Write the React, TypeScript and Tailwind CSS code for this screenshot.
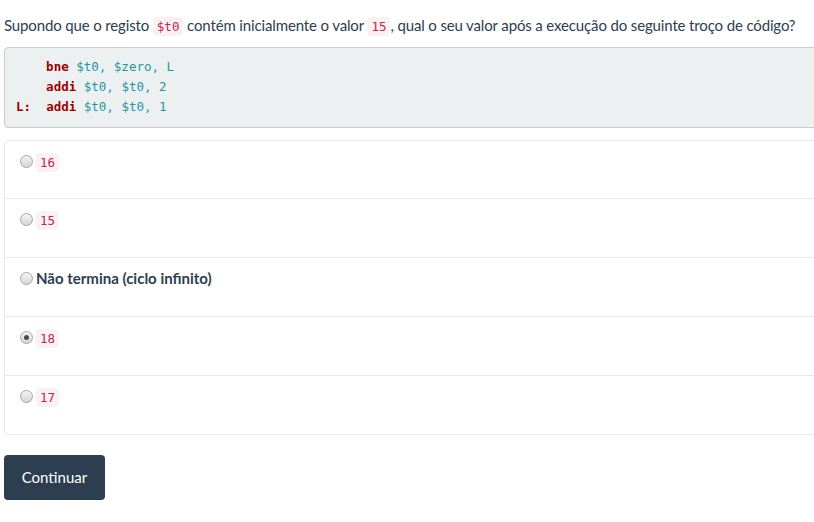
import React from "react";

const mono = { fontFamily: '"DejaVu Sans Mono", "Liberation Mono", monospace' };

function Code({ children }: { children: React.ReactNode }) {
  return (
    <code
      style={mono}
      className="rounded-[4px] bg-[#f9f2f4] px-[4px] py-[2px] text-[12.5px] tracking-normal text-[#c7254e]"
    >
      {children}
    </code>
  );
}

function Radio({ checked }: { checked?: boolean }) {
  return (
    <span className="mt-[4px] flex h-[13px] w-[13px] shrink-0 items-center justify-center rounded-full border border-[#a6a6a6] bg-gradient-to-b from-[#f4f4f4] to-[#d6d6d6]">
      {checked && <span className="h-[5px] w-[5px] rounded-full bg-[#4a4a4a]" />}
    </span>
  );
}

const options: { content: React.ReactNode; checked?: boolean }[] = [
  { content: <Code>16</Code> },
  { content: <Code>15</Code> },
  { content: <span className="font-bold">Não termina (ciclo infinito)</span> },
  { content: <Code>18</Code>, checked: true },
  { content: <Code>17</Code> },
];

export default function App() {
  const kw = "font-bold text-[#a00000]";
  const op = "text-[#1f97a3]";
  return (
    <div
      className="h-[522px] w-[814px] overflow-hidden bg-white text-[15px] leading-[21px] text-[#2c3e50]"
      style={{ fontFamily: 'Lato, "Open Sans", sans-serif' }}
    >
      <div className="w-[840px] pl-[4px] pt-[15px]">
        <p className="tracking-[-0.14px]">
          Supondo que o registo <Code>$t0</Code> contém inicialmente o valor <Code>15</Code>, qual o seu valor após a
          execução do seguinte troço de código?
        </p>
        <pre
          style={mono}
          className="mt-[10px] h-[81px] rounded-[4px] border border-[#cccccc] bg-[#ecf0f1] px-[11px] pt-[9px] text-[12.5px] leading-[20px]"
        >
          <div>
            {"    "}
            <span className={kw}>bne</span> <span className={op}>$t0, $zero, L</span>
          </div>
          <div>
            {"    "}
            <span className={kw}>addi</span> <span className={op}>$t0, $t0, 2</span>
          </div>
          <div>
            <span className={kw}>L:</span>
            {"  "}
            <span className={kw}>addi</span> <span className={op}>$t0, $t0, 1</span>
          </div>
        </pre>
        <div className="mt-[12px] rounded-[4px] border border-[#e6eaeb]">
          {options.map((o, i) => {
            const last = i === options.length - 1;
            const cls =
              i === 0
                ? "h-[58px] border-b border-[#e6eaeb]"
                : last
                  ? "h-[58px]"
                  : "h-[59px] border-b border-[#e6eaeb]";
            return (
              <div key={i} className={`${cls} px-[15px] pt-[10px]`}>
                <label className="flex items-start gap-[3px]">
                  <Radio checked={o.checked} />
                  <span>{o.content}</span>
                </label>
              </div>
            );
          })}
        </div>
        <button className="mt-[20px] flex h-[45px] w-[101px] items-center justify-center rounded-[4px] bg-[#2c3e50] text-[15px] text-white">
          Continuar
        </button>
      </div>
    </div>
  );
}
